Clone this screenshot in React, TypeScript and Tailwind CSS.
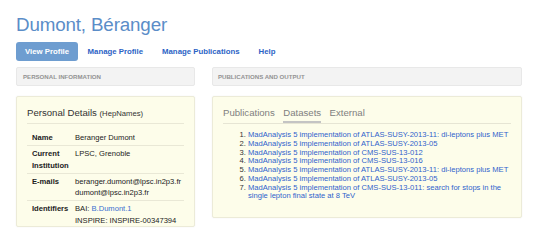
import React from "react";

const datasets = [
  "MadAnalysis 5 implementation of ATLAS-SUSY-2013-11: di-leptons plus MET",
  "MadAnalysis 5 implementation of ATLAS-SUSY-2013-05",
  "MadAnalysis 5 implementation of CMS-SUS-13-012",
  "MadAnalysis 5 implementation of CMS-SUS-13-016",
  "MadAnalysis 5 implementation of ATLAS-SUSY-2013-11: di-leptons plus MET",
  "MadAnalysis 5 implementation of ATLAS-SUSY-2013-05",
  "MadAnalysis 5 implementation of CMS-SUS-13-011: search for stops in the single lepton final state at 8 TeV",
];

export default function App() {
  return (
    <div
      className="w-[549px] h-[248px] bg-white overflow-hidden pl-[16px] pt-[14px]"
      style={{ fontFamily: '"Liberation Sans", Arial, sans-serif' }}
    >
      <h1 className="text-[18.8px] leading-[22px] text-[#5b8dc8] tracking-[-0.15px]">Dumont, Béranger</h1>
      <nav className="flex items-center mt-[6px] h-[19px] text-[7.8px] font-bold">
        <span className="h-[19px] flex items-center px-[9px] rounded-[3px] bg-[#6e9dd0] text-white">View Profile</span>
        <span className="px-[9.5px] text-[#2c63c5]">Manage Profile</span>
        <span className="px-[9.5px] text-[#2c63c5]">Manage Publications</span>
        <span className="px-[9.5px] text-[#2c63c5]">Help</span>
      </nav>
      <div className="flex gap-[17px] mt-[6px] items-start">
        <div className="w-[179px] flex flex-col gap-[10px]">
          <div className="h-[19px] flex items-center px-[6px] bg-[#f3f3f3] border border-[#e8e8e8] rounded-[2px] text-[6.1px] font-bold text-[#929292] uppercase">
            Personal Information
          </div>
          <div className="bg-[#fdfdea] border border-[#ecebd8] rounded-[2px] shadow-[0_0_2px_rgba(0,0,0,0.06)] px-[10px] pt-[10px]">
            <div className="text-[9.6px] leading-[12px] text-[#333] pb-[3px] border-b border-[#e9e8d6]">
              Personal Details <span className="text-[7.7px]">(HepNames)</span>
            </div>
            <div className="mt-[6px] text-[7.6px] leading-[11.3px] text-[#222]">
              <div className="grid grid-cols-[48px_1fr] py-[2px]">
                <div className="pl-[5px] font-bold">Name</div>
                <div>Beranger Dumont</div>
              </div>
              <div className="grid grid-cols-[48px_1fr] py-[2px] border-t border-[#e9e8d6]">
                <div className="pl-[5px] font-bold">Current Institution</div>
                <div>LPSC, Grenoble</div>
              </div>
              <div className="grid grid-cols-[48px_1fr] py-[2px] border-t border-[#e9e8d6]">
                <div className="pl-[5px] font-bold">E-mails</div>
                <div>
                  <div>beranger.dumont@lpsc.in2p3.fr</div>
                  <div>dumont@lpsc.in2p3.fr</div>
                </div>
              </div>
              <div className="grid grid-cols-[48px_1fr] pt-[2px] border-t border-[#e9e8d6]">
                <div className="pl-[5px] font-bold">Identifiers</div>
                <div>
                  <div>
                    BAI: <span className="text-[#3a6fd0]">B.Dumont.1</span>
                  </div>
                  <div>INSPIRE: INSPIRE-00347394</div>
                </div>
              </div>
            </div>
          </div>
        </div>
        <div className="w-[310px] flex flex-col gap-[10px]">
          <div className="h-[19px] flex items-center px-[5px] bg-[#f3f3f3] border border-[#e8e8e8] rounded-[2px] text-[6.1px] font-bold text-[#929292] uppercase">
            Publications and Output
          </div>
          <div className="bg-[#fdfdea] border border-[#ecebd8] rounded-[2px] shadow-[0_0_2px_rgba(0,0,0,0.06)] px-[10px] pt-[10px] pb-[16px]">
            <div className="flex items-end gap-[8.5px] text-[9.6px] leading-[12px] text-[#808080] border-b border-[#e6e5d4]">
              <span className="pb-[4px]">Publications</span>
              <span className="pb-[2px] border-b-[2px] border-[#c4c4c4]">Datasets</span>
              <span className="pb-[4px]">External</span>
            </div>
            <ol className="list-decimal pl-[25px] mt-[7px] text-[7.6px] leading-[8.75px] text-[#333]">
              {datasets.map((d, i) => (
                <li key={i}>
                  <span className="text-[#2f62cc]">{d}</span>
                </li>
              ))}
            </ol>
          </div>
        </div>
      </div>
    </div>
  );
}
